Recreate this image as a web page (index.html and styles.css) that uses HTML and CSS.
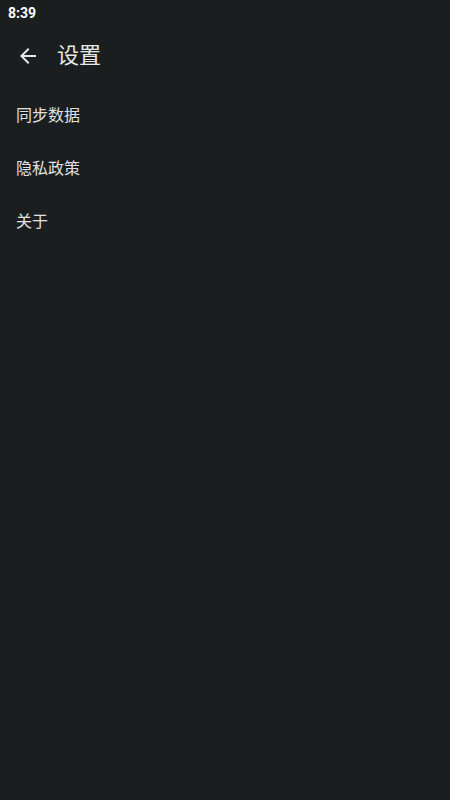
FILE: index.html
```html
<!DOCTYPE html>
<html lang="zh">
<head>
<meta charset="utf-8">
<link rel="stylesheet" href="styles.css">
</head>
<body>
<div class="status">8:39</div>
<header class="appbar">
  <svg class="back" viewBox="0 0 24 24" width="24" height="24"><path fill="#e8e8e8" d="M20 11H7.83l5.59-5.59L12 4l-8 8 8 8 1.41-1.41L7.83 13H20v-2z"/></svg>
  <h1 class="title">设置</h1>
</header>
<ul class="list">
  <li class="item">同步数据</li>
  <li class="item">隐私政策</li>
  <li class="item">关于</li>
</ul>
</body>
</html>
```
FILE: styles.css
```css
html, body {
  margin: 0;
  padding: 0;
  background: #1b1e1f;
  height: 100%;
}
body {
  font-family: Roboto, "Noto Sans CJK SC", sans-serif;
  color: #e4e4e4;
}
.status {
  height: 26px;
  line-height: 26px;
  padding-left: 8px;
  font-size: 14px;
  font-weight: bold;
  color: #ffffff;
}
.appbar {
  height: 60px;
  display: flex;
  align-items: center;
  padding-left: 16px;
}
.back {
  display: block;
  margin-right: 17px;
}
.title {
  margin: 0;
  font-size: 22px;
  line-height: 1;
  font-weight: normal;
  color: #e8e8e8;
}
.list {
  list-style: none;
  margin: 0;
  padding: 3px 0 0 0;
}
.item {
  height: 53px;
  line-height: 53px;
  padding-left: 16px;
  font-size: 16px;
  color: #e0e0e0;
}
```
